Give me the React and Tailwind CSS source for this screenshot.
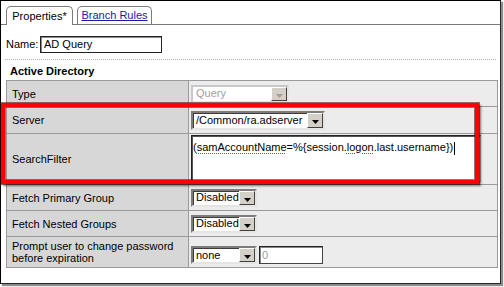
import React from "react";

function Arrow({ disabled }) {
  return (
    <svg width="7" height="4" viewBox="0 0 7 4" className="mt-[4px]">
      <polygon points="0,0 7,0 3.5,4" fill={disabled ? "#a0a0a0" : "#000"} />
    </svg>
  );
}

function DropButton({ disabled }) {
  return (
    <div className="w-[16px] shrink-0 bg-[#d4d0c8] border border-t-white border-l-white border-r-[#404040] border-b-[#404040] flex items-center justify-center">
      <Arrow disabled={disabled} />
    </div>
  );
}

function Select({ text, className, disabled }) {
  return (
    <div
      className={
        "flex items-stretch bg-white border-2 border-t-[#7c7c7c] border-l-[#7c7c7c] border-r-[#e4e4e4] border-b-[#e4e4e4] shadow-[inset_1px_1px_0_#3c3c3c] " +
        className
      }
    >
      <div
        className={
          "flex-1 flex items-center pl-[3px] whitespace-nowrap overflow-hidden " +
          (disabled ? "text-[#a0a0a0]" : "text-black")
        }
      >
        {text}
      </div>
      <DropButton disabled={disabled} />
    </div>
  );
}

function Row({ label, children, className, valueClass }) {
  return (
    <div className={"flex border-b border-[#9a9a9a] " + className}>
      <div className="w-[182px] shrink-0 bg-[#d7d7d7] border-r border-[#9a9a9a] pl-[5px] flex items-center leading-[12px]">
        {label}
      </div>
      <div className={"flex-1 bg-[#ececec] pl-[2px] flex " + (valueClass || "items-center")}>
        {children}
      </div>
    </div>
  );
}

export default function App() {
  return (
    <div className="relative w-[504px] h-[287px] bg-white overflow-hidden font-['Liberation_Sans',Arial,sans-serif] text-[11px] text-black">
      <div className="w-[501px] h-[284px] border border-black border-r-[#262626] border-b-[#262626] shadow-[2px_2px_1px_rgba(0,0,0,0.45)] flex flex-col">
        {/* Tabs */}
        <div className="mt-[5px] h-[19px] flex items-end gap-[4px] pl-[5px] border-b border-[#7a7a7a]">
          <div className="-mb-px h-[19px] w-[67px] bg-white border border-b-0 border-[#7a7a7a] rounded-t-[5px] flex items-center justify-center">
            Properties*
          </div>
          <div className="h-[18px] w-[75px] bg-white border border-b-0 border-[#7a7a7a] rounded-t-[5px] flex items-center justify-center">
            <span className="text-[#1a1aa6] underline">Branch Rules</span>
          </div>
        </div>

        {/* Name */}
        <div className="mt-[11px] flex items-center pl-[5px]">
          <span className="w-[34px]">Name:</span>
          <div className="w-[122px] h-[17px] border border-[#222] shadow-[inset_1px_1px_0_#888] pl-[3px] flex items-center">
            AD Query
          </div>
        </div>

        <div className="mt-[6px] mx-[4px] border-t border-dotted border-[#b4b4b4]" />

        <div className="mt-[5px] pl-[9px] font-bold leading-[13px]">Active Directory</div>

        {/* Table */}
        <div className="mt-[2px] ml-[5px] w-[492px] border border-[#9a9a9a] border-b-0">
          <Row label="Type" className="h-[26px]">
            <Select
              text="Query"
              disabled
              className="w-[98px] h-[18px] border-t-[#c8c8c8] border-l-[#c8c8c8] shadow-none"
            />
          </Row>
          <Row label="Server" className="h-[27px]">
            <Select text="/Common/ra.adserver" className="w-[134px] h-[19px]" />
          </Row>
          <Row label="SearchFilter" className="h-[51px]" valueClass="items-start pt-[1px]">
            <div className="w-[290px] h-[47px] bg-white border border-[#222] border-r-[#aaa] border-b-[#aaa] shadow-[inset_1px_1px_0_#555] pl-[1px] pt-[3px] whitespace-nowrap">
              (
              <span className="underline decoration-dotted decoration-[#e03030] decoration-[1px] underline-offset-[2px]">
                samAccountName
              </span>
              =%{"{"}session.
              <span className="underline decoration-dotted decoration-[#e03030] decoration-[1px] underline-offset-[2px]">
                logon
              </span>
              .last.username{"}"})
              <span className="inline-block w-px h-[13px] bg-black align-middle ml-[1px]" />
            </div>
          </Row>
          <Row label="Fetch Primary Group" className="h-[26px]">
            <Select text="Disabled" className="w-[66px] h-[18px]" />
          </Row>
          <Row label="Fetch Nested Groups" className="h-[26px]">
            <Select text="Disabled" className="w-[66px] h-[18px]" />
          </Row>
          <Row
            label={
              <span>
                Prompt user to change password
                <br />
                before expiration
              </span>
            }
            className="h-[31px]"
            valueClass="items-end pb-[3px]"
          >
            <Select text="none" className="w-[66px] h-[18px]" />
            <div className="ml-[2px] w-[64px] h-[18px] bg-white border border-[#222] border-r-[#444] border-b-[#444] shadow-[inset_1px_1px_0_#888] pl-[2px] flex items-center text-[#9a9a9a]">
              0
            </div>
          </Row>
        </div>
      </div>

      {/* Red highlight */}
      <div className="absolute left-[1px] top-[103px] w-[478px] h-[81px] border-[4px] border-[#ff0000] shadow-[0_0_0_1px_rgba(70,0,0,0.55),inset_0_0_0_1px_rgba(70,0,0,0.55),2px_2px_2px_rgba(0,0,0,0.5)]" />
    </div>
  );
}
